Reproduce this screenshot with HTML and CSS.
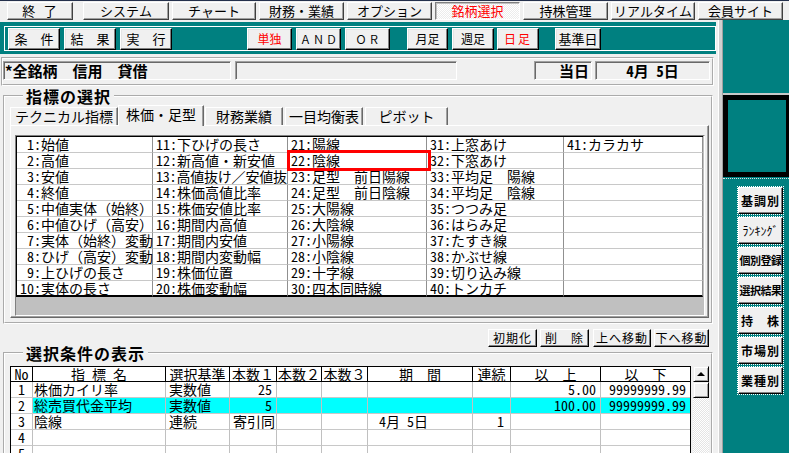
FILE: index.html
```html
<!DOCTYPE html>
<html lang="ja">
<head>
<meta charset="utf-8">
<title>銘柄選択</title>
<link rel="stylesheet" href="styles.css">
</head>
<body>
<div class="menubar">
  <button class="mb m1">終 了</button>
  <button class="mb m2">システム</button>
  <button class="mb m3">チャート</button>
  <button class="mb m4">財務・業績</button>
  <button class="mb m5">オプション</button>
  <button class="mb m6 active">銘柄選択</button>
  <button class="mb m7">持株管理</button>
  <button class="mb m8">リアルタイム</button>
  <button class="mb m9">会員サイト</button>
</div>
<div class="main">
  <div class="left">
    <div class="toolbar">
      <div class="toolbar-inner">
        <button class="tb t-cond">条　件</button>
        <button class="tb t-res">結　果</button>
        <button class="tb t-run">実　行</button>
        <button class="tb sm red t-single">単独</button>
        <button class="tb sm wide t-and">ＡＮＤ</button>
        <button class="tb sm wide t-or">ＯＲ</button>
        <button class="tb sm t-month">月足</button>
        <button class="tb sm t-week">週足</button>
        <button class="tb sm red t-day">日足</button>
        <button class="tb t-base">基準日</button>
      </div>
    </div>
    <div class="infobar">
      <div class="field f1">*全銘柄　信用　貸借</div>
      <div class="field f2"></div>
      <div class="field f3">当日</div>
      <div class="field f4">4月 5日</div>
    </div>
    <fieldset class="group g1">
      <legend>指標の選択</legend>
      <div class="tabs">
        <div class="tab tab1">テクニカル指標</div>
        <div class="tab tab2 on">株価・足型</div>
        <div class="tab tab3">財務業績</div>
        <div class="tab tab4">一目均衡表</div>
        <div class="tab tab5">ピボット</div>
      </div>
      <div class="panel">
        <div class="gridbox">
          <table class="grid">
            <colgroup><col class="c1"><col class="c2"><col class="c3"><col class="c4"><col class="c5"></colgroup>
            <tr><td> 1:始値</td><td>11:下ひげの長さ</td><td>21:陽線</td><td>31:上窓あけ</td><td>41:カラカサ</td></tr>
            <tr><td> 2:高値</td><td>12:新高値・新安値</td><td class="sel">22:陰線</td><td>32:下窓あけ</td><td></td></tr>
            <tr><td> 3:安値</td><td class="tight">13:高値抜け／安値抜</td><td>23:足型　前日陽線</td><td>33:平均足　陽線</td><td></td></tr>
            <tr><td> 4:終値</td><td>14:株価高値比率</td><td>24:足型　前日陰線</td><td>34:平均足　陰線</td><td></td></tr>
            <tr><td> 5:中値実体（始終）</td><td>15:株価安値比率</td><td>25:大陽線</td><td>35:つつみ足</td><td></td></tr>
            <tr><td> 6:中値ひげ（高安）</td><td>16:期間内高値</td><td>26:大陰線</td><td>36:はらみ足</td><td></td></tr>
            <tr><td> 7:実体（始終）変動</td><td>17:期間内安値</td><td>27:小陽線</td><td>37:たすき線</td><td></td></tr>
            <tr><td> 8:ひげ（高安）変動</td><td>18:期間内変動幅</td><td>28:小陰線</td><td>38:かぶせ線</td><td></td></tr>
            <tr><td> 9:上ひげの長さ</td><td>19:株価位置</td><td>29:十字線</td><td>39:切り込み線</td><td></td></tr>
            <tr class="last"><td>10:実体の長さ</td><td>20:株価変動幅</td><td>30:四本同時線</td><td>40:トンカチ</td><td></td></tr>
          </table>
        </div>
      </div>
    </fieldset>
    <div class="actions">
      <button class="ab a1">初期化</button>
      <button class="ab a2">削　除</button>
      <button class="ab a3">上へ移動</button>
      <button class="ab a4">下へ移動</button>
    </div>
    <fieldset class="group g2">
      <legend>選択条件の表示</legend>
      <div class="listwrap">
        <table class="list">
          <colgroup><col class="l1"><col class="l2"><col class="l3"><col class="l4"><col class="l5"><col class="l6"><col class="l7"><col class="l8"><col class="l9"><col class="l10"></colgroup>
          <tr class="head"><th>No</th><th>指 標 名</th><th>選択基準</th><th>本数１</th><th>本数２</th><th>本数３</th><th>期　間</th><th>連続</th><th>以　上</th><th class="end">以　下</th></tr>
          <tr><td class="no">1</td><td>株価カイリ率</td><td>実数値</td><td class="r">25</td><td></td><td></td><td></td><td></td><td class="r">5.00</td><td class="r end">99999999.99</td></tr>
          <tr class="hl"><td class="no">2</td><td>総売買代金平均</td><td>実数値</td><td class="r">5</td><td></td><td></td><td></td><td></td><td class="r">100.00</td><td class="r end">99999999.99</td></tr>
          <tr><td class="no">3</td><td>陰線</td><td>連続</td><td>寄引同</td><td></td><td></td><td class="date"> 4月 5日</td><td class="r cnt">1</td><td></td><td class="end"></td></tr>
          <tr><td class="no">4</td><td></td><td></td><td></td><td></td><td></td><td></td><td></td><td></td><td class="end"></td></tr>
          <tr><td class="no">5</td><td></td><td></td><td></td><td></td><td></td><td></td><td></td><td></td><td class="end"></td></tr>
        </table>
        <div class="vscroll">
          <div class="sb-btn"><span class="arrow"></span></div>
          <div class="sb-thumb"></div>
          <div class="sb-track"></div>
        </div>
      </div>
    </fieldset>
  </div>
  <div class="divider"></div>
  <div class="side">
    <div class="side-top"></div>
    <div class="monitor"></div>
    <div class="side-sep"></div>
    <div class="side-btns">
      <button class="sbtn">基調別</button>
      <button class="sbtn half">ﾗﾝｷﾝｸﾞ</button>
      <button class="sbtn four">個別登録</button>
      <button class="sbtn four">選択結果</button>
      <button class="sbtn">持　株</button>
      <button class="sbtn">市場別</button>
      <button class="sbtn">業種別</button>
    </div>
  </div>
</div>
</body>
</html>
```

FILE: styles.css
```css
* { box-sizing: border-box; }
html, body { margin: 0; padding: 0; }
body {
  width: 789px;
  height: 453px;
  overflow: hidden;
  background: #f0f0f0;
  color: #000;
  font-family: "Noto Sans Mono CJK JP", "Noto Sans CJK JP", sans-serif;
  font-size: 14px;
}
button {
  font: inherit;
  color: inherit;
  margin: 0;
  padding: 0;
  background: #f0f0f0;
  -webkit-appearance: none;
  appearance: none;
  white-space: pre;
  text-align: center;
}

/* ===== top menu ===== */
.menubar {
  display: flex;
  gap: 3px;
  height: 20px;
  border-top: 1px solid #24304c;
  padding: 1px 0 0 7px;
}
.mb {
  height: 18px;
  font-size: 13px;
  line-height: 16px;
  border: 1px solid;
  border-color: #fff #404040 #404040 #fff;
  box-shadow: inset -1px -1px #a0a0a0;
}
.m1 { width: 66px; margin-right: 7px; letter-spacing: 1px; }
.m2 { width: 86px; }
.m3 { width: 84px; }
.m4 { width: 85px; }
.m5 { width: 85px; }
.m6 { width: 85px; }
.m7 { width: 85px; }
.m8 { width: 84px; }
.m9 { width: 85px; }
.mb.active {
  color: #ff0000;
  border-color: #808080 #fff #fff #808080;
  box-shadow: inset 1px 1px #c0c0c0;
  background: repeating-conic-gradient(#ffffff 0 25%, #ececec 0 50%) 0 0 / 2px 2px;
}

/* ===== main layout ===== */
.main {
  display: flex;
  height: 433px;
}
.left {
  width: 716px;
  flex: none;
}
.divider {
  width: 7px;
  flex: none;
  background: linear-gradient(90deg, #f0f0f0 0 2px, #ffffff 2px 3px, #d0d0d0 3px 6px, #a0a0a0 6px 7px);
}
.side {
  width: 66px;
  flex: none;
  background: #008080;
}

/* ===== toolbar ===== */
.toolbar {
  margin-top: 2px;
  background: #008080;
  padding: 4px 0 3px 4px;
}
.toolbar-inner {
  height: 25px;
  border: 1px solid #fff;
  display: flex;
  align-items: flex-start;
  padding: 1px 0 0 3px;
}
.tb {
  height: 22px;
  font-size: 13px;
  line-height: 20px;
  border: 1px solid;
  border-color: #fff #000 #000 #fff;
  box-shadow: inset -1px -1px #808080, inset 1px 1px #e4e4e4;
}
.tb.sm { font-size: 12px; }
.tb.wide { font-size: 11px; letter-spacing: 2px; padding-left: 2px; }
.tb.red { color: #ff0000; }
.t-cond { width: 52px; }
.t-res { width: 52px; margin-left: 4px; }
.t-run { width: 52px; margin-left: 4px; }
.t-single { width: 45px; margin-left: 75px; }
.t-and { width: 45px; margin-left: 4px; }
.t-or { width: 45px; margin-left: 4px; }
.t-month { width: 41px; margin-left: 17px; }
.t-week { width: 42px; margin-left: 4px; }
.t-day { width: 42px; margin-left: 3px; letter-spacing: 2px; }
.t-base { width: 46px; margin-left: 16px; }

/* ===== info bar ===== */
.infobar {
  margin: 3px 2px 0 1px;
  height: 29px;
  border: 2px groove #fff;
  display: flex;
  padding: 2px 0 0 0;
}
.field {
  height: 19px;
  border: 1px solid;
  border-color: #a0a0a0 #fff #fff #a0a0a0;
  box-shadow: inset 1px 1px #696969;
  font-size: 15px;
  font-weight: bold;
  line-height: 17px;
  white-space: pre;
}
.f1 { width: 228px; padding-left: 1px; }
.f2 { width: 222px; margin-left: 4px; }
.f3 { width: 58px; margin-left: 77px; text-align: right; padding-right: 2px; }
.f4 { width: 115px; margin-left: 3px; text-align: center; }

/* ===== group boxes ===== */
.group {
  border: 2px groove #fff;
  margin: 0 3px;
  min-width: 0;
}
.group legend {
  font-size: 16px;
  font-weight: bold;
  line-height: 12px;
  letter-spacing: 1px;
  padding: 0 3px;
  margin-left: 13px;
}
.g1 {
  margin-top: 4px;
  padding: 3px 2px 4px 5px;
}
.g2 {
  margin-top: 0;
  padding: 7px 3px 0 5px;
  height: 120px;
}

/* ===== tabs ===== */
.tabs {
  display: flex;
  align-items: flex-end;
}
.tab {
  height: 18px;
  font-size: 14px;
  line-height: 17px;
  text-align: center;
  white-space: nowrap;
  border: 1px solid;
  border-bottom: none;
  border-color: #fff #696969 transparent #fff;
  box-shadow: inset -1px 0 #a0a0a0;
}
.tab.on {
  height: 21px;
  margin-bottom: -1px;
  line-height: 17px;
  position: relative;
  z-index: 1;
  background: #f0f0f0;
}
.tab1 { width: 108px; }
.tab2 { width: 86px; }
.tab3 { width: 78px; margin-left: 1px; }
.tab4 { width: 78px; margin-left: 2px; }
.tab5 { width: 83px; margin-left: 2px; }

.panel {
  width: 699px;
  height: 193px;
  border: 1px solid;
  border-color: #fff #696969 #696969 #fff;
  box-shadow: inset -1px -1px #a0a0a0;
  padding: 9px 3px 1px 4px;
}
.gridbox {
  width: 690px;
  height: 181px;
  border: 1px solid;
  border-color: #808080 #fff #fff #808080;
  background: #c0c0c0;
}
.grid {
  width: 687px;
  table-layout: fixed;
  border-collapse: separate;
  border-spacing: 0;
  background: #fff;
  border-top: 1px solid #000;
  border-left: 1px solid #000;
}
.grid .c1 { width: 136px; }
.grid .c2 { width: 135px; }
.grid .c3 { width: 139px; }
.grid .c4 { width: 137px; }
.grid .c5 { width: 139px; }
.grid tr { height: 16px; }
.grid td {
  padding: 0 0 0 3px;
  font-size: 14px;
  line-height: 15px;
  white-space: pre;
  border-right: 1px solid #909090;
  border-bottom: 1px solid #c8c8c8;
  vertical-align: middle;
}
.grid td.tight { letter-spacing: -0.2px; }
.grid tr.last td { border-bottom: 2px solid #000; line-height: 14px; }
.grid td.sel { position: relative; }
.grid td.sel::after {
  content: "";
  position: absolute;
  top: -3px;
  left: -1px;
  right: -5px;
  bottom: -3px;
  border: 3px solid #ff0000;
}

/* ===== action buttons ===== */
.actions {
  display: flex;
  justify-content: flex-end;
  margin-top: 5px;
  padding-right: 7px;
}
.ab {
  height: 18px;
  font-size: 12px;
  line-height: 16px;
  letter-spacing: 1px;
  border: 1px solid;
  border-color: #fff #000 #000 #fff;
  box-shadow: inset -1px -1px #808080;
}
.a1 { width: 49px; }
.a2 { width: 49px; margin-left: 3px; }
.a3 { width: 58px; margin-left: 4px; }
.a4 { width: 55px; margin-left: 3px; }

/* ===== selection list ===== */
.listwrap {
  display: flex;
  gap: 2px;
  align-items: flex-start;
}
.list {
  width: 680px;
  flex: none;
  table-layout: fixed;
  border-collapse: separate;
  border-spacing: 0;
  background: #fff;
  border-top: 1px solid #000;
  border-left: 1px solid #000;
  border-right: 1px solid #000;
}
.list .l1 { width: 22px; }
.list .l2 { width: 133px; }
.list .l3 { width: 64px; }
.list .l4 { width: 47px; }
.list .l5 { width: 45px; }
.list .l6 { width: 46px; }
.list .l7 { width: 105px; }
.list .l8 { width: 38px; }
.list .l9 { width: 90px; }
.list .l10 { width: 89px; }
.list tr { height: 16px; }
.list tr.head { height: 15px; }
.list th {
  font-weight: normal;
  font-size: 14px;
  line-height: 14px;
  padding: 0;
  white-space: pre;
  text-align: center;
  border-right: 1px solid #000;
  border-bottom: 1px solid #000;
}
.list td {
  font-size: 14px;
  line-height: 15px;
  padding: 0 4px 0 1px;
  white-space: pre;
  border-right: 1px solid #c0c0c0;
  border-bottom: 1px solid #c8c8c8;
}
.list th.end, .list td.end { border-right: none; }
.list td:nth-child(3), .list td:nth-child(4) { padding-left: 3px; }
.list td.r { text-align: right; }
.list td.cnt { padding-right: 6px; }
.list td.no { text-align: center; padding: 0; }
.list td.date { padding-left: 4px; }
.list tr.hl td { background: #00ffff; }
.list tr.hl td.no { background: #fff; }

.vscroll {
  width: 16px;
  flex: none;
  display: flex;
  flex-direction: column;
}
.sb-btn, .sb-thumb {
  height: 16px;
  border: 1px solid;
  border-color: #f0f0f0 #000 #000 #f0f0f0;
  box-shadow: inset 1px 1px #fff, inset -1px -1px #a0a0a0;
  background: #f0f0f0;
}
.sb-btn {
  display: flex;
  align-items: center;
  justify-content: center;
}
.arrow {
  width: 0;
  height: 0;
  border-left: 4px solid transparent;
  border-right: 4px solid transparent;
  border-bottom: 4px solid #000;
}
.sb-track {
  height: 80px;
  background: repeating-conic-gradient(#ffffff 0 25%, #e4e4e4 0 50%) 0 0 / 2px 2px;
}

/* ===== right side panel ===== */
.side-top {
  height: 75px;
  border-bottom: 2px solid #c8c8c8;
}
.monitor {
  height: 82px;
  border: 5px solid #000;
  border-right-width: 3px;
  background: #008080;
}
.side-sep {
  margin-top: 1px;
  border-top: 1px dotted #e0e0e0;
}
.side-btns {
  display: flex;
  flex-direction: column;
  gap: 3px;
  padding: 8px 0 0 15px;
}
.sbtn {
  width: 45px;
  height: 27px;
  font-size: 12px;
  font-weight: bold;
  line-height: 25px;
  letter-spacing: 1px;
  border: 1px solid;
  border-color: #fff #000 #000 #fff;
  box-shadow: inset -1px -1px #808080;
  outline: 1px dotted #ffffff;
}
.sbtn.four { font-size: 11px; letter-spacing: -0.5px; }
.sbtn.half { letter-spacing: 0; font-size: 12px; font-weight: normal; }
```
